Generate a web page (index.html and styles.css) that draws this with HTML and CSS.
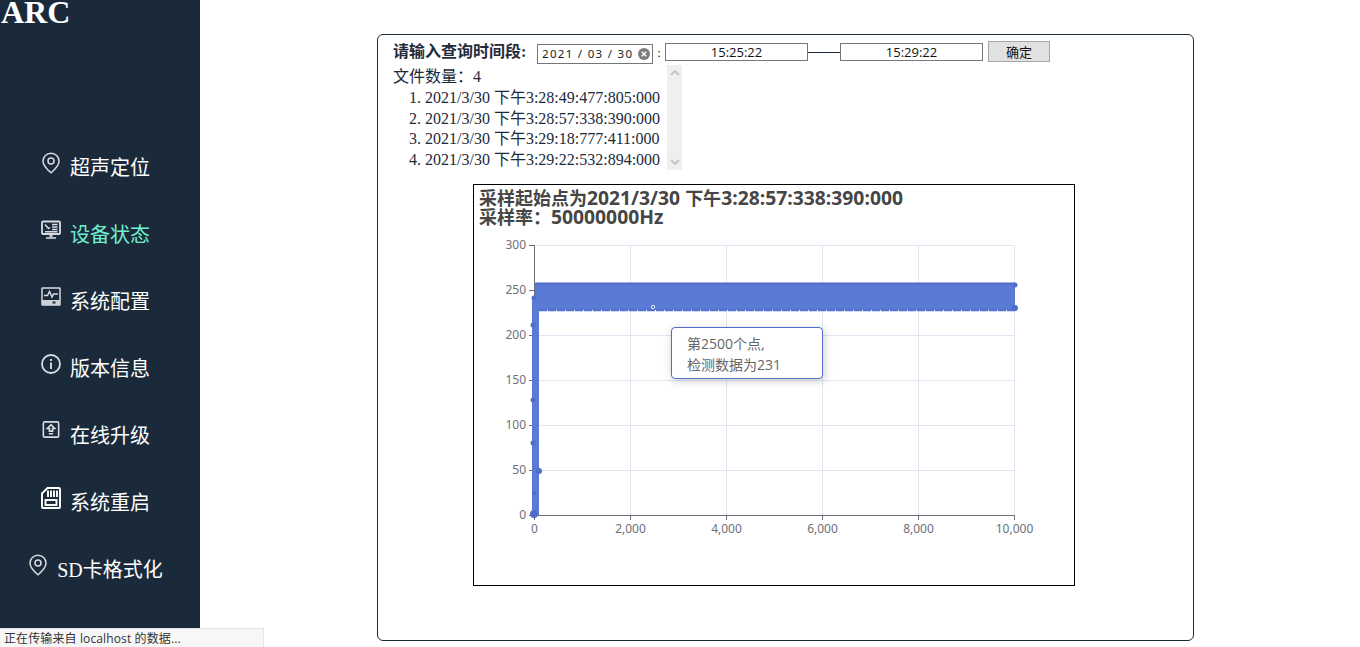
FILE: index.html
```html
<!DOCTYPE html>
<html lang="zh-CN">
<head>
<meta charset="utf-8">
<title>ARC</title>
<link rel="stylesheet" href="styles.css">
</head>
<body>
<div class="page">
  <aside class="sidebar">
    <h1 class="logo">ARC</h1>
    <nav class="nav">
      <a class="nav-item">
        <svg class="icon" viewBox="0 0 20 22"><path class="ln" d="M10 1.200a8 8 0 0 0-8 8c0 4.600 4.600 8.600 8 11.600 3.400-3 8-7 8-11.600a8 8 0 0 0-8-8z"/><circle class="ln" cx="10" cy="9" r="3"/></svg>
        <span>超声定位</span>
      </a>
      <a class="nav-item active">
        <svg class="icon" viewBox="0 0 20 20"><rect class="ln thick" x="1" y="1.500" width="18" height="12.500" rx="1"/><path class="ln" d="M4 4.500l3.500 4 1.500-1M11 4.500h5.500M11 7h5.500M11 9.500h5.500M4 11.700h12.500M5 18h10"/><path class="fl" d="M8.500 14h3v3.500h-3z"/></svg>
        <span>设备状态</span>
      </a>
      <a class="nav-item">
        <svg class="icon" viewBox="0 0 20 20"><rect class="ln" x="1" y="1" width="18" height="17" rx=".5"/><path class="ln" d="M3 8.500h3.500l2-4 2.500 5.500 1.500-3H17"/><path class="fl" d="M1 13h18v5H1z"/><path class="dk" d="M11.500 14.500h3v2h-3z"/></svg>
        <span>系统配置</span>
      </a>
      <a class="nav-item">
        <svg class="icon" viewBox="0 0 20 20"><circle class="ln thick" cx="10" cy="10" r="9"/><path class="fl" d="M9 8.500h2V15H9zM9 5h2v2H9z"/></svg>
        <span>版本信息</span>
      </a>
      <a class="nav-item">
        <svg class="icon icon-up" viewBox="0 0 16 16"><rect class="ln" x=".8" y=".8" width="14.400" height="14.400" rx="1.200"/><path class="ln" d="M8 3.500L4.500 7H6.500v2.500h3V7h2zM6 12h4"/></svg>
        <span>在线升级</span>
      </a>
      <a class="nav-item">
        <svg class="icon" viewBox="0 0 20 22"><path class="ln bright" d="M6.500 1H18a1 1 0 0 1 1 1v18a1 1 0 0 1-1 1H2a1 1 0 0 1-1-1V6.500z"/><path class="ln bright" d="M7 3.500V10M10 3.500V10M13 3.500V10M16 3.500V10"/><rect class="ln bright" x="4.500" y="13" width="11" height="5"/></svg>
        <span>系统重启</span>
      </a>
      <a class="nav-item">
        <svg class="icon" viewBox="0 0 20 22"><path class="ln" d="M10 1.200a8 8 0 0 0-8 8c0 4.600 4.600 8.600 8 11.600 3.400-3 8-7 8-11.600a8 8 0 0 0-8-8z"/><circle class="ln" cx="10" cy="9" r="3"/></svg>
        <span>SD卡格式化</span>
      </a>
    </nav>
  </aside>
  <main class="main">
    <section class="panel">
      <div class="query">
        <strong class="query-label">请输入查询时间段:</strong>
        <div class="date-field">
          <span class="date-text">2021 / 03 / 30</span>
          <svg class="clear" viewBox="0 0 12 12"><circle cx="6" cy="6" r="6" fill="#7d7d7d"/><path d="M3.800 3.800l4.400 4.400M8.200 3.800L3.800 8.200" stroke="#fff" stroke-width="1.500"/></svg>
        </div>
        <span class="colon">:</span>
        <input class="time-field" type="text" value="15:25:22">
        <span class="dash"></span>
        <input class="time-field" type="text" value="15:29:22">
        <button class="confirm" type="button">确定</button>
      </div>
      <div class="files">
        <div class="file-list">
          <div class="file-count">文件数量：4</div>
          <ol class="file-items">
            <li>2021/3/30 下午3:28:49:477:805:000</li>
            <li>2021/3/30 下午3:28:57:338:390:000</li>
            <li>2021/3/30 下午3:29:18:777:411:000</li>
            <li>2021/3/30 下午3:29:22:532:894:000</li>
          </ol>
        </div>
        <div class="scrollbar">
          <svg class="arrow" viewBox="0 0 10 6"><path d="M1 5l4-4 4 4"/></svg>
          <svg class="arrow" viewBox="0 0 10 6"><path d="M1 1l4 4 4-4"/></svg>
        </div>
      </div>
      <div class="chart">
        <div class="chart-title">采样起始点为<span class="latin">2021/3/30 </span>下午<span class="latin">3:28:57:338:390:000</span><br>采样率：<span class="latin">50000000Hz</span></div>
        <svg class="plot" viewBox="0 0 600 400" width="600" height="400">
          <g class="grid">
            <path d="M60.500 60.500H540.500M60.500 105.500H540.500M60.500 150.500H540.500M60.500 195.500H540.500M60.500 240.500H540.500M60.500 285.500H540.500"/>
            <path d="M156.500 60V330M252.500 60V330M348.500 60V330M444.500 60V330M540.500 60V330"/>
          </g>
          <g class="axis">
            <path d="M60.500 60V335M55 60.500H60.500M55 105.500H60.500M55 150.500H60.500M55 195.500H60.500M55 240.500H60.500M55 285.500H60.500M55 330.500H60.500"/>
            <path d="M60 330.500H540.500M60.500 330V335M156.500 330V335M252.500 330V335M348.500 330V335M444.500 330V335M540.500 330V335"/>
          </g>
          <g class="y-labels">
            <text x="52" y="63.500">300</text>
            <text x="52" y="108.500">250</text>
            <text x="52" y="153.500">200</text>
            <text x="52" y="198.500">150</text>
            <text x="52" y="243.500">100</text>
            <text x="52" y="288.500">50</text>
            <text x="52" y="333.500">0</text>
          </g>
          <g class="x-labels">
            <text x="60.500" y="348">0</text>
            <text x="156.500" y="348">2,000</text>
            <text x="252.500" y="348">4,000</text>
            <text x="348.500" y="348">6,000</text>
            <text x="444.500" y="348">8,000</text>
            <text x="540.500" y="348">10,000</text>
          </g>
          <g class="series">
            <rect class="band" x="61" y="98" width="480" height="27"/>
            <path class="band-top" d="M61 98.500H541"/>
            <path class="band-low" d="M65 125H541"/>
            <rect class="band" x="58" y="112" width="7" height="218"/>
            <circle class="pt" cx="541" cy="100" r="2.500"/>
            <circle class="pt" cx="541" cy="123" r="3"/>
            <circle class="pt" cx="60" cy="113" r="2.500"/>
            <circle class="pt" cx="59" cy="140" r="2.500"/>
            <circle class="pt" cx="59" cy="215" r="2.500"/>
            <circle class="pt" cx="59" cy="258" r="2.500"/>
            <circle class="pt" cx="65" cy="286" r="3"/>
            <circle class="pt" cx="60" cy="308" r="2"/>
            <circle class="pt" cx="60" cy="329" r="4"/>
            <circle class="mark" cx="179" cy="122" r="1.700"/>
          </g>
        </svg>
        <div class="tooltip">第2500个点,<br>检测数据为231</div>
      </div>
    </section>
  </main>
</div>
<div class="status">正在传输来自 localhost 的数据...</div>
</body>
</html>
```
FILE: styles.css
```css
* { box-sizing: border-box; }
html, body { margin: 0; height: 647px; overflow: hidden; background: #fff; }
body { font-family: "Liberation Serif", "Noto Sans CJK SC", serif; font-size: 16px; color: #1c2a3a; }
.page { display: flex; height: 647px; }

.sidebar { width: 200px; flex: none; background: #1b2a3b; color: #fff; }
.logo { margin: 0; height: 114px; padding-left: 1px; font-size: 32px; line-height: 24px; font-weight: 700; color: #fff; }
.nav { display: flex; flex-direction: column; padding-top: 18px; }
.nav-item { height: 67px; display: flex; align-items: center; justify-content: center; gap: 9px; padding-right: 9px; font-size: 20px; color: #fff; }
.nav-item span { margin-top: 2px; }
.nav-item.active { color: #70f0d0; }
.icon { width: 20px; height: 22px; flex: none; margin-bottom: 6px; }
.icon-up { width: 20px; height: 17px; margin-bottom: 8px; }
.ln { fill: none; stroke: #d8dce1; stroke-width: 1.500; }
.thick { stroke-width: 1.800; }
.bright { stroke: #fff; stroke-width: 1.900; }
.fl { fill: #cdd1d6; }
.dk { fill: #1b2a3b; }

.main { flex: 1; padding: 34px 0 0 177px; }
.panel { position: relative; width: 817px; height: 607px; border: 1px solid #1b2a3b; border-radius: 6px; padding: 6px 0 0 15px; }

.query { display: flex; align-items: center; height: 24px; }
.query-label { width: 144px; margin-bottom: 2px; font-size: 16px; font-weight: 700; line-height: 22px; color: #1f2b39; }
.date-field { display: flex; align-items: center; justify-content: space-between; width: 116px; height: 20px; margin-top: 2px; padding: 0 2px 0 4px; border: 1px solid #767676; font-family: "Noto Sans", sans-serif; font-size: 11.500px; letter-spacing: 1.300px; color: #222; }
.date-text { margin-bottom: 2px; }
.clear { width: 12px; height: 12px; flex: none; }
.colon { width: 12px; text-align: center; font-size: 13px; color: #222; }
.time-field { width: 143px; height: 18px; margin: 0 0 2px; padding: 0; border: 1px solid #767676; background: #fff; text-align: center; font-family: "Open Sans", sans-serif; font-size: 13px; color: #111; }
.dash { width: 32px; height: 1px; margin-bottom: 2px; background: #1b2a3b; }
.confirm { width: 62px; height: 21px; margin: 0 0 3px 5px; padding: 0; border: 1px solid #a6a6a6; background: #e1e1e1; font-family: "Noto Sans CJK SC", sans-serif; font-size: 13px; color: #111; }

.files { display: flex; height: 106px; }
.file-list { width: 274px; }
.file-count { height: 23px; padding-top: 1px; line-height: 21px; }
.file-items { margin: 0; padding: 0 0 0 32px; }
.file-items li { height: 20.700px; line-height: 20.700px; white-space: nowrap; font-size: 16px; }
.scrollbar { width: 15px; height: 105px; background: #efefef; display: flex; flex-direction: column; justify-content: space-between; align-items: center; padding: 5px 0; }
.arrow { width: 10px; height: 6px; }
.arrow path { fill: none; stroke: #c4c4c4; stroke-width: 1.800; }

.chart { position: relative; width: 602px; height: 402px; margin: 13px 0 0 80px; border: 1px solid #000; background: #fff; }
.chart-title { position: absolute; left: 5px; top: 3px; font-family: "Noto Sans CJK SC", sans-serif; font-size: 18px; font-weight: 700; line-height: 18px; color: #464646; white-space: nowrap; }
.latin { font-family: "Open Sans", sans-serif; font-size: 19.300px; line-height: 18px; }
.plot { display: block; font-family: "Noto Sans", "Noto Sans CJK SC", sans-serif; font-size: 12px; }
.grid path { fill: none; stroke: #e0e6f1; stroke-width: 1; }
.axis path { fill: none; stroke: #6e7079; stroke-width: 1; }
.y-labels text { text-anchor: end; fill: #6e7079; }
.x-labels text { text-anchor: middle; fill: #6e7079; }
.band { fill: #5b7ad6; }
.band-top { fill: none; stroke: #4f6cc8; stroke-width: 2; }
.band-low { fill: none; stroke: #5573cf; stroke-width: 2.500; stroke-dasharray: 8 1; }
.pt { fill: #4f6cc8; }
.mark { fill: #5b7ad6; stroke: #e9edf9; stroke-width: 1; }

.tooltip { position: absolute; left: 197px; top: 142px; width: 152px; height: 52px; padding: 5px 0 0 15px; border: 1px solid #4f6cc8; border-radius: 4px; background: #fff; box-shadow: 1px 2px 10px rgba(0, 0, 0, .2); font-family: "Open Sans", "Noto Sans CJK SC", sans-serif; font-size: 14px; line-height: 21px; color: #666; white-space: nowrap; }

.status { position: fixed; left: 0; bottom: 0; width: 264px; height: 19px; padding-left: 4px; border-top: 1px solid #e4e4e4; border-right: 1px solid #e4e4e4; background: #f7f7f7; font-family: "Open Sans", "Noto Sans CJK SC", sans-serif; font-size: 12px; letter-spacing: .12px; line-height: 19px; color: #333; white-space: nowrap; }
```
